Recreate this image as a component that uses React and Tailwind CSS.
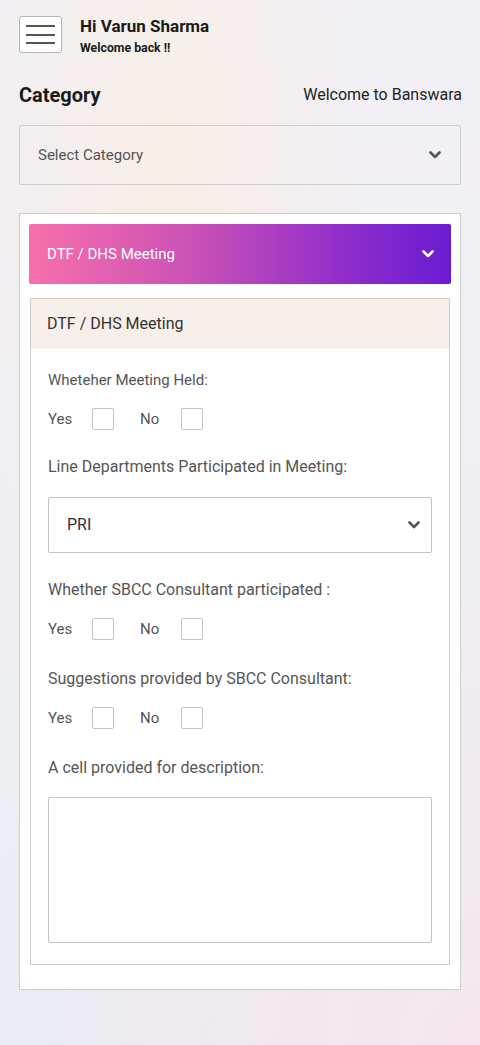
import React from 'react';

function Chevron({ className }) {
  return (
    <svg width="12" height="8" viewBox="0 0 12 8" className={className} fill="none">
      <polyline points="1.5,1.5 6,6 10.5,1.5" stroke="currentColor" strokeWidth="2.6" strokeLinecap="round" strokeLinejoin="round" />
    </svg>
  );
}

function YesNo() {
  return (
    <div className="flex items-center h-[22px] mt-[17px] text-[15px] text-[#555]">
      <span className="w-[44px]">Yes</span>
      <span className="w-[22px] h-[22px] border border-[#c4c4c4] rounded-[2px] bg-white" />
      <span className="ml-[26px] w-[41px]">No</span>
      <span className="w-[22px] h-[22px] border border-[#c4c4c4] rounded-[2px] bg-white" />
    </div>
  );
}

function Label({ children, small, className = '' }) {
  return (
    <p className={`${small ? 'text-[15px]' : 'text-[16px]'} leading-[22px] text-[#555] ${className}`}>
      {children}
    </p>
  );
}

export default function App() {
  return (
    <div
      className="min-h-[1045px] px-[19px] pt-4 pb-[55px] bg-[radial-gradient(circle_at_100%_100%,#f6e6ee_0%,transparent_45%),radial-gradient(ellipse_at_35%_18%,#f8eee6_0%,transparent_45%),linear-gradient(180deg,#f2f0f5_0%,#efeff3_55%,#e8edf2_100%)]"
      style={{ fontFamily: 'Roboto, "Liberation Sans", sans-serif' }}
    >
      {/* Header */}
      <div className="flex items-start">
        <button className="w-[43px] h-[37px] border border-[#b4b3c2] rounded-[3px] bg-white flex flex-col items-center justify-center gap-[6.5px]">
          <span className="block w-[29px] h-[2px] bg-[#555]" />
          <span className="block w-[29px] h-[2px] bg-[#555]" />
          <span className="block w-[29px] h-[2px] bg-[#555]" />
        </button>
        <div className="ml-[18px] pt-px">
          <p className="text-[17px] leading-[18px] font-bold text-[#1a1a1a]">Hi Varun Sharma</p>
          <p className="text-[12.3px] leading-[14px] font-bold text-[#1a1a1a] mt-[6px]">Welcome back !!</p>
        </div>
      </div>

      {/* Category row */}
      <div className="flex items-center justify-between mt-[26px] h-[28px]">
        <h2 className="text-[20px] font-bold text-[#1a1a1a]">Category</h2>
        <span className="text-[16px] text-[#222] -mr-px">Welcome to Banswara</span>
      </div>

      <div className="mt-[16px] h-[60px] border border-[#cccccc] rounded-[2px] flex items-center justify-between pl-[18px] pr-[19px]">
        <span className="text-[15px] text-[#555]">Select Category</span>
        <Chevron className="text-[#555]" />
      </div>

      {/* Card */}
      <div className="mt-[28px] bg-white border border-[#cccccc] pt-[10px] px-[9px] pb-[24px]">
        <div className="h-[60px] rounded-[2px] bg-[linear-gradient(90deg,#f86fab_0%,#c850b6_40%,#8f2dcb_75%,#6a1cd2_100%)] flex items-center justify-between pl-[18px] pr-[17px]">
          <span className="text-[15px] text-white">DTF / DHS Meeting</span>
          <Chevron className="text-white" />
        </div>

        <div className="mt-[14px] mx-px border border-[#cccccc]">
          <div className="h-[50px] bg-[#f8efea] flex items-center px-4">
            <span className="text-[16px] text-[#333]">DTF / DHS Meeting</span>
          </div>
          <div className="px-[17px] pt-[20px] pb-[21px]">
            <Label small>Wheteher Meeting Held:</Label>
            <YesNo />

            <Label className="mt-[26px]">Line Departments Participated in Meeting:</Label>
            <div className="mt-[19px] h-[56px] border border-[#c4c4c4] rounded-[2px] flex items-center justify-between pl-[18px] pr-[11px]">
              <span className="text-[16px] text-[#333]">PRI</span>
              <Chevron className="text-[#555]" />
            </div>

            <Label className="mt-[26px]">Whether SBCC Consultant participated :</Label>
            <YesNo />

            <Label className="mt-[28px]">Suggestions provided by SBCC Consultant:</Label>
            <YesNo />

            <Label className="mt-[28px]">A cell provided for description:</Label>
            <textarea className="mt-[18px] block w-full h-[146px] border border-[#c4c4c4] rounded-[2px] resize-none outline-none" />
          </div>
        </div>
      </div>
    </div>
  );
}
